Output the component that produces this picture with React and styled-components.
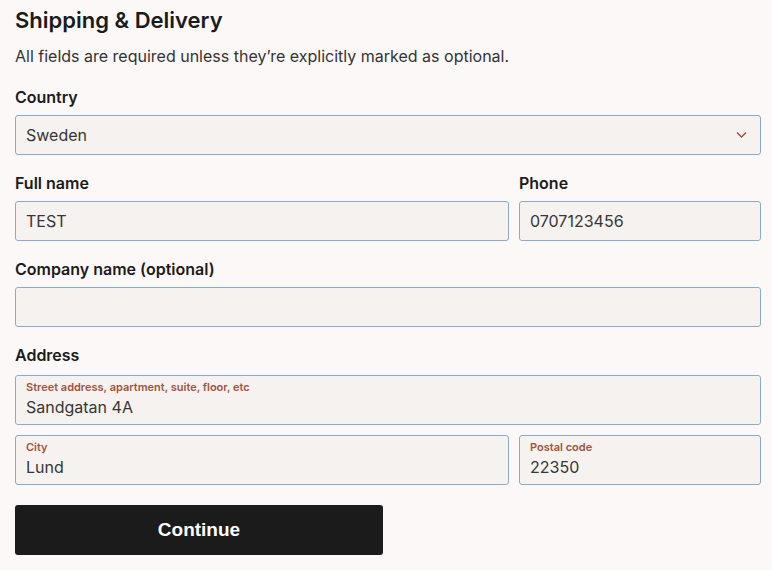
import React, { useState } from 'react';
import styled, { createGlobalStyle } from 'styled-components';

const GlobalStyle = createGlobalStyle`
  * { box-sizing: border-box; }
  body {
    margin: 0;
    background: #fcf8f7;
    font-family: Inter, "Noto Sans", sans-serif;
    color: #1b1b1b;
  }
`;

const Page = styled.div`
  padding: 6px 11px 20px 15px;
`;

const Title = styled.h1`
  margin: 0;
  font-size: 22px;
  font-weight: 600;
  line-height: 28px;
  color: #1b1b1b;
`;

const Intro = styled.p`
  margin: 10px 0 0;
  font-size: 16px;
  line-height: 24px;
  color: #333;
`;

const Form = styled.form`
  display: flex;
  flex-direction: column;
  margin-top: 19px;
  gap: 18px;
`;

const Row = styled.div`
  display: grid;
  grid-template-columns: ${(p) => p.$cols || '1fr'};
  gap: 10px;
`;

const Field = styled.div`
  display: flex;
  flex-direction: column;
  gap: 8px;
`;

const Group = styled.div`
  display: flex;
  flex-direction: column;
  gap: 10px;
`;

const Label = styled.label`
  font-size: 16px;
  font-weight: 600;
  line-height: 20px;
  color: #1b1b1b;
`;

const Box = styled.div`
  position: relative;
  height: ${(p) => (p.$tall ? '50px' : '40px')};
  border: 1px solid #8aa9c9;
  border-radius: 3px;
  background: #f6f2ef;
  display: flex;
  flex-direction: column;
  justify-content: ${(p) => (p.$tall ? 'flex-start' : 'center')};
  padding: ${(p) => (p.$tall ? '4px 10px 0' : '0 10px')};
`;

const Input = styled.input`
  border: none;
  outline: none;
  background: transparent;
  padding: 0;
  font-family: inherit;
  font-size: 16px;
  line-height: 20px;
  color: #363636;
  width: 100%;
`;

const Floating = styled.span`
  font-size: 11px;
  font-weight: 600;
  line-height: 14px;
  color: #a0533f;
  margin-bottom: 3px;
`;

const Chevron = styled.svg`
  position: absolute;
  right: 13px;
  top: 50%;
  transform: translateY(-50%);
`;

const Button = styled.button`
  margin-top: 2px;
  width: 368px;
  height: 50px;
  border: none;
  border-radius: 3px;
  background: #1b1b1b;
  color: #fff;
  font-family: "Liberation Sans", Arial, sans-serif;
  font-size: 19px;
  font-weight: 700;
  cursor: pointer;
`;

const TextField = ({ label, value, onChange }) => (
  <Field>
    <Label>{label}</Label>
    <Box>
      <Input value={value} onChange={(e) => onChange(e.target.value)} />
    </Box>
  </Field>
);

const AddressBox = ({ hint, value, onChange }) => (
  <Box $tall>
    <Floating>{hint}</Floating>
    <Input value={value} onChange={(e) => onChange(e.target.value)} />
  </Box>
);

export default function App() {
  const [form, setForm] = useState({
    name: 'TEST',
    phone: '0707123456',
    company: '',
    street: 'Sandgatan 4A',
    city: 'Lund',
    zip: '22350',
  });
  const set = (key) => (v) => setForm((f) => ({ ...f, [key]: v }));

  return (
    <>
      <GlobalStyle />
      <Page>
        <Title>Shipping &amp; Delivery</Title>
        <Intro>All fields are required unless they’re explicitly marked as optional.</Intro>
        <Form onSubmit={(e) => e.preventDefault()}>
          <Field>
            <Label>Country</Label>
            <Box>
              <Input value="Sweden" readOnly />
              <Chevron width="11" height="7" viewBox="0 0 11 7">
                <path d="M1 1l4.5 4.5L10 1" fill="none" stroke="#9b4a38" strokeWidth="1.3" />
              </Chevron>
            </Box>
          </Field>
          <Row $cols="1fr 242px">
            <TextField label="Full name" value={form.name} onChange={set('name')} />
            <TextField label="Phone" value={form.phone} onChange={set('phone')} />
          </Row>
          <TextField label="Company name (optional)" value={form.company} onChange={set('company')} />
          <Group>
            <Label>Address</Label>
            <AddressBox
              hint="Street address, apartment, suite, floor, etc"
              value={form.street}
              onChange={set('street')}
            />
            <Row $cols="1fr 242px">
              <AddressBox hint="City" value={form.city} onChange={set('city')} />
              <AddressBox hint="Postal code" value={form.zip} onChange={set('zip')} />
            </Row>
          </Group>
          <Button type="submit">Continue</Button>
        </Form>
      </Page>
    </>
  );
}
